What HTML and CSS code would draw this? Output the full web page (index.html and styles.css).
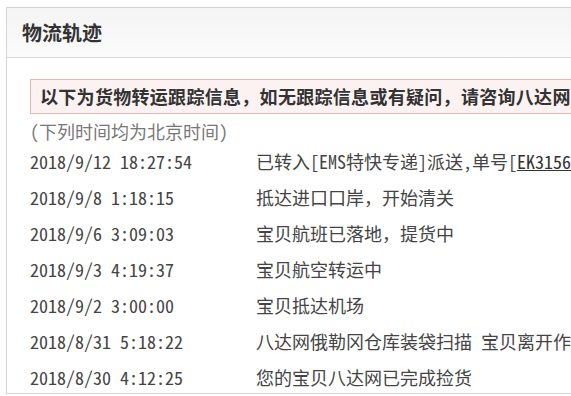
FILE: index.html
```html
<!DOCTYPE html>
<html lang="zh-CN">
<head>
<meta charset="utf-8">
<title>物流轨迹</title>
<link rel="stylesheet" href="styles.css">
</head>
<body>
<div class="panel">
  <div class="panel-head"><h3 class="panel-title">物流轨迹</h3></div>
  <div class="panel-body">
    <div class="alert">以下为货物转运跟踪信息，如无跟踪信息或有疑问，请咨询八达网</div>
    <p class="note">(下列时间均为北京时间)</p>
    <ul class="track">
      <li class="track-row"><span class="time">2018/9/12 18:27:54</span><span class="desc">已转入[EMS特快专递]派送,单号[<a class="link" href="#">EK31568</a></span></li>
      <li class="track-row"><span class="time">2018/9/8 1:18:15</span><span class="desc">抵达进口口岸，开始清关</span></li>
      <li class="track-row"><span class="time">2018/9/6 3:09:03</span><span class="desc">宝贝航班已落地，提货中</span></li>
      <li class="track-row"><span class="time">2018/9/3 4:19:37</span><span class="desc">宝贝航空转运中</span></li>
      <li class="track-row"><span class="time">2018/9/2 3:00:00</span><span class="desc">宝贝抵达机场</span></li>
      <li class="track-row"><span class="time">2018/8/31 5:18:22</span><span class="desc">八达网俄勒冈仓库装袋扫描 宝贝离开作</span></li>
      <li class="track-row"><span class="time">2018/8/30 4:12:25</span><span class="desc">您的宝贝八达网已完成捡货</span></li>
    </ul>
  </div>
</div>
</body>
</html>
```

FILE: styles.css
```css
html, body {
  margin: 0;
  padding: 0;
  background: #fff;
  overflow: hidden;
}
body {
  padding: 7px 0 0 6px;
  font-family: "Noto Sans Mono CJK SC", "Noto Sans CJK SC", monospace;
  color: #333;
}
.panel {
  width: 820px;
  border: 1px solid #d4d4d4;
  background: #fff;
}
.panel-head {
  height: 49px;
  display: flex;
  align-items: center;
  padding-left: 15px;
  background: linear-gradient(#f4f4f4, #fbfbfb);
  border-bottom: 1px solid #d9d9d9;
}
.panel-title {
  margin: 0;
  font-size: 20px;
  font-weight: bold;
  color: #333;
  line-height: 1;
}
.panel-body {
  padding: 21px 0 0 23px;
  white-space: nowrap;
}
.alert {
  border: 1px solid #e6b9b9;
  background: #fcf2f2;
  height: 33px;
  line-height: 33px;
  padding-left: 9px;
  font-size: 18px;
  font-weight: bold;
  letter-spacing: 0.3px;
  color: #333;
}
.note {
  margin: 5px 0 0 0;
  height: 24px;
  line-height: 24px;
  font-size: 18px;
  color: #777;
}
.track {
  list-style: none;
  margin: 0 0 -2px 0;
  padding: 0;
}
.track-row {
  display: flex;
  height: 36px;
  align-items: center;
  font-size: 18px;
  color: #444;
}
.time {
  width: 226px;
  flex: none;
}
.desc {
  flex: none;
}
.link {
  color: #333;
  text-decoration: underline;
}
```
